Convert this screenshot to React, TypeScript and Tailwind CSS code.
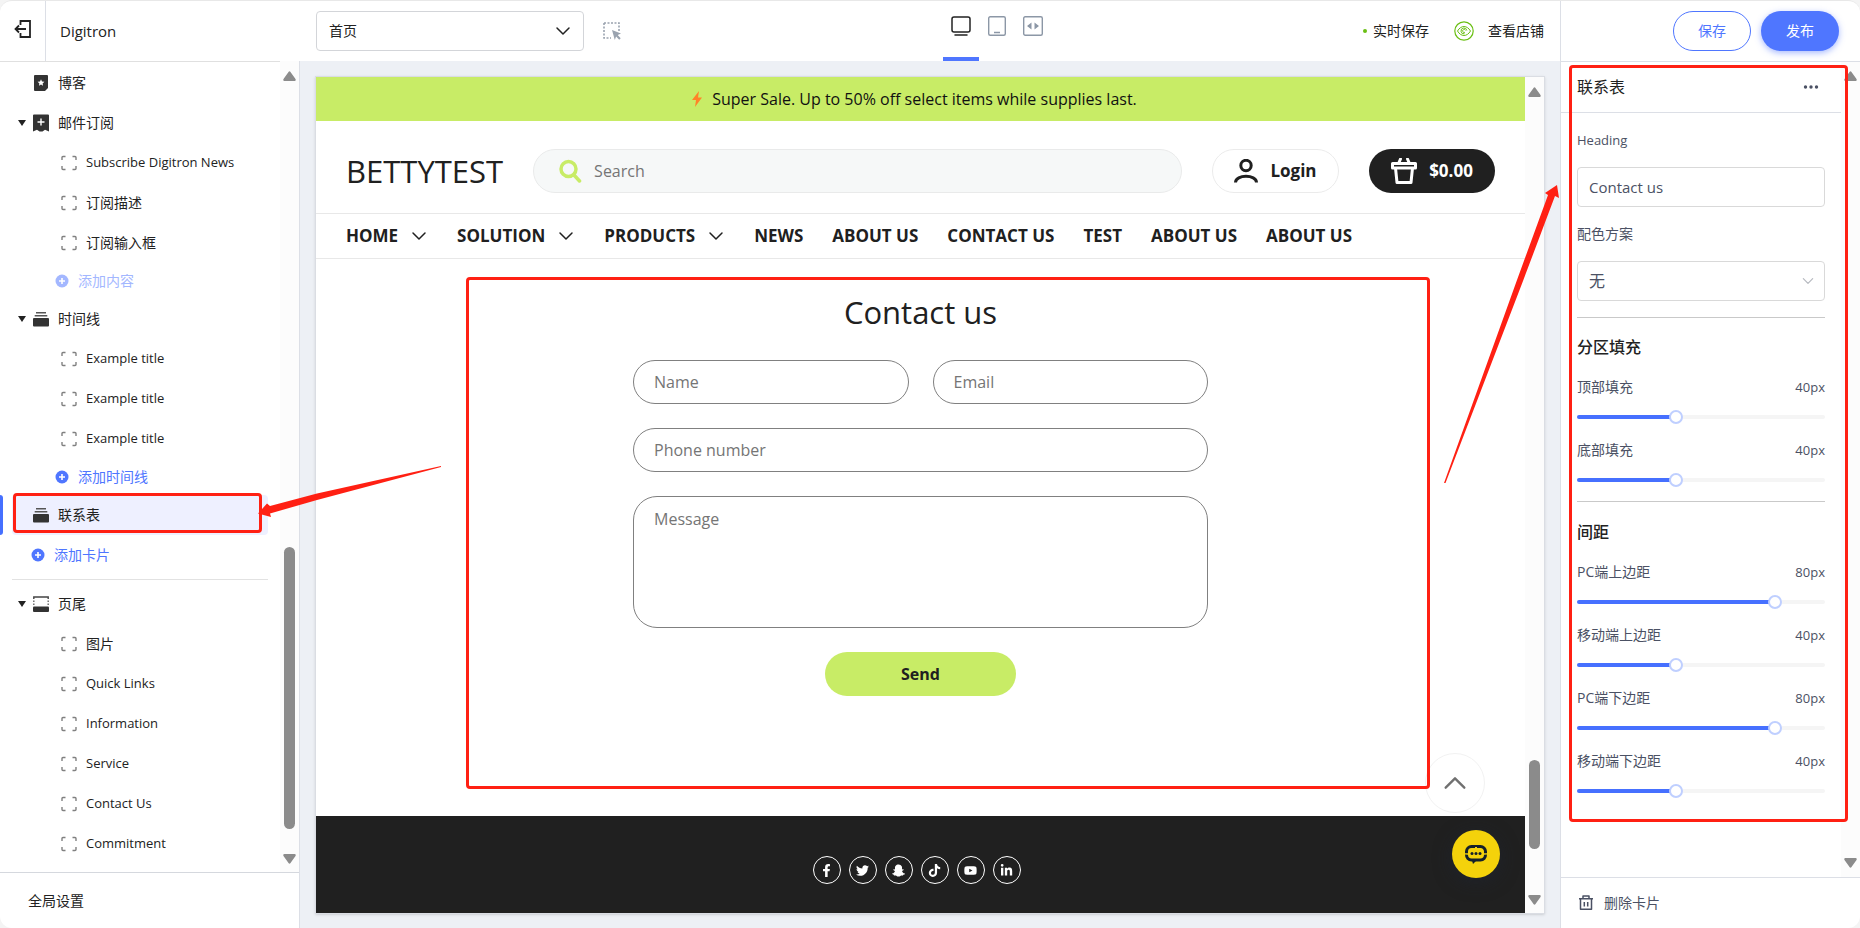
import { useState } from "react";
import type { ReactNode } from "react";
import { clsx } from "clsx";
import {
	FaFacebookF,
	FaLinkedinIn,
	FaSnapchatGhost,
	FaTiktok,
	FaTwitter,
	FaYoutube,
} from "react-icons/fa";

interface ChevronProps {
	className?: string;
	up?: boolean;
}

const Chevron = ({ className, up }: ChevronProps) => (
	<svg
		viewBox="0 0 18 18"
		fill="none"
		stroke="currentColor"
		strokeWidth="1.5"
		strokeLinecap="round"
		strokeLinejoin="round"
		className={className}>
		<path d={up ? "M3 12l6-6 6 6" : "M3 6l6 6 6-6"} />
	</svg>
);

const ExitIcon = () => (
	<svg viewBox="0 0 20 20" fill="none" stroke="#222" strokeWidth="1.800" className="size-5">
		<path d="M7.500 6V2H17v16H7.500v-4" />
		<path d="M13 10H3M6 6.500L2.500 10 6 13.500" />
	</svg>
);

const PickIcon = () => (
	<svg viewBox="0 0 20 20" fill="none" className="size-5">
		<path
			d="M2 2h15v8M2 2v15h7"
			stroke="#9aa3af"
			strokeWidth="1.600"
			strokeDasharray="2 1.500"
		/>
		<path d="M10 9l9 3.500-3.300 1.500 3 3.200-1.500 1.500-3.100-3.100L12.800 19z" fill="#9aa3af" />
	</svg>
);

const DesktopIcon = () => (
	<svg viewBox="0 0 20 20" fill="none" stroke="#222" strokeWidth="1.500" className="size-5">
		<rect x="1" y="1" width="18" height="15" rx="2" />
		<path d="M4 19h12" strokeLinecap="round" />
	</svg>
);

const TabletIcon = () => (
	<svg viewBox="0 0 20 20" fill="none" stroke="#8c97a6" strokeWidth="1.400" className="size-5">
		<rect x="1.700" y="0.700" width="16.600" height="18.600" rx="1.500" />
		<path d="M7 16.500h6" />
	</svg>
);

const WideIcon = () => (
	<svg viewBox="0 0 20 20" fill="none" stroke="#8c97a6" strokeWidth="1.400" className="size-5">
		<rect x="0.700" y="0.700" width="18.600" height="18.600" rx="1.500" />
		<path d="M8.500 6.500v7L4 10zM11.500 6.500v7L16 10z" fill="#8c97a6" stroke="none" />
	</svg>
);

const EyeIcon = () => (
	<svg viewBox="0 0 20 20" fill="none" stroke="#6abf13" className="size-5">
		<circle cx="10" cy="10" r="9.200" strokeWidth="1.200" />
		<path d="M3.500 10c3.500-6 9.500-6 13 0-3.500 6-9.500 6-13 0z" />
		<path d="M12.800 9.500a2.900 2.900 0 1 0-2.300 3.300M11.500 9.300a1.500 1.500 0 1 0-.6 2" />
	</svg>
);

const BlogIcon = () => (
	<svg viewBox="0 0 18 18" className="size-[18px]">
		<path d="M2 2a1 1 0 0 1 1-1h12a1 1 0 0 1 1 1v12l-3 3H3a1 1 0 0 1-1-1z" fill="#333" />
		<path
			d="M9 5.300l1 2.200 2.400.3-1.800 1.600.5 2.400L9 10.600l-2.100 1.200.5-2.400-1.800-1.600 2.400-.3z"
			fill="#fff"
		/>
	</svg>
);

const BookmarkIcon = () => (
	<svg viewBox="0 0 18 18" className="size-[18px]">
		<path d="M1 1.500a1 1 0 0 1 1-1h14a1 1 0 0 1 1 1v16l-4-1.800-2.500 1.800h-3L5 15.700l-4 1.800z" fill="#333" />
		<path d="M9 4.500v7M5.500 8h7" stroke="#fff" strokeWidth="1.400" />
	</svg>
);

const StackIcon = () => (
	<svg viewBox="0 0 18 18" className="size-[18px]">
		<path d="M4 2.700h10M2.700 5.800h12.600" stroke="#555" strokeWidth="1.500" />
		<rect x="1" y="8" width="16" height="8.500" rx="1" fill="#333" />
	</svg>
);

const FooterIcon = () => (
	<svg viewBox="0 0 18 18" className="size-[18px]">
		<path d="M1.800 4V2h14.400v2" fill="none" stroke="#444" strokeWidth="1.400" />
		<path d="M1.800 5.500v6M16.200 5.500v6" stroke="#666" strokeWidth="1.400" strokeDasharray="1.500 1.500" />
		<rect x="1" y="11.500" width="16" height="5.500" rx="1" fill="#333" />
	</svg>
);

const BlockIcon = () => (
	<svg viewBox="0 0 18 18" fill="none" stroke="#808080" strokeWidth="1.400" className="size-[18px]">
		<path d="M5.500 2.500H3a1 1 0 0 0-1 1V6M12.500 2.500H15a1 1 0 0 1 1 1V6M2 12v2.500a1 1 0 0 0 1 1h2.500M16 12v2.500a1 1 0 0 1-1 1h-2.500" />
	</svg>
);

const PlusIcon = () => (
	<svg viewBox="0 0 16 16" className="size-4">
		<circle cx="8" cy="8" r="6.500" fill="currentColor" />
		<path d="M8 5v6M5 8h6" stroke="#fff" strokeWidth="1.600" />
	</svg>
);

const SearchIcon = () => (
	<svg
		viewBox="0 0 24 24"
		fill="none"
		stroke="#c8ec66"
		strokeWidth="3.500"
		strokeLinecap="round"
		className="size-6 shrink-0">
		<circle cx="10.500" cy="10" r="7.500" />
		<path d="M16 16l5.500 6" />
	</svg>
);

const UserIcon = () => (
	<svg viewBox="0 0 24 24" fill="none" stroke="#202020" strokeWidth="3" className="size-6">
		<circle cx="12" cy="6.500" r="5.200" />
		<path d="M1.500 23.500c0-8.300 21-8.300 21 0" />
	</svg>
);

const BasketIcon = () => (
	<svg
		viewBox="0 0 26 26"
		fill="none"
		stroke="#fff"
		strokeWidth="3"
		strokeLinejoin="round"
		className="size-[26px]">
		<path d="M1.500 5.500h23v4.500h-23z" />
		<path d="M4.500 10l1.500 14.500h14L21.500 10" />
		<path d="M9.500 1L7.500 5.500M16.500 1L18.500 5.500" strokeLinecap="round" />
	</svg>
);

const ChatIcon = () => (
	<svg viewBox="0 0 24 24" fill="none" className="size-6">
		<path
			d="M2.500 11.300V9.500a5 5 0 0 1 5-5h9a5 5 0 0 1 5 5v1.800M2.500 12.700a5 5 0 0 0 5 5.300h9a5 5 0 0 0 5-5.300"
			stroke="#14202b"
			strokeWidth="3"
		/>
		<path d="M8 18.500h4.500L9 22z" fill="#14202b" />
		<path d="M11 5h2v1.500h-2z" fill="#f4d20b" />
		<circle cx="8" cy="11.500" r="1.500" fill="#14202b" />
		<circle cx="12" cy="11.500" r="1.500" fill="#14202b" />
		<circle cx="16" cy="11.500" r="1.500" fill="#14202b" />
	</svg>
);

const TrashIcon = () => (
	<svg
		viewBox="0 0 16 16"
		fill="none"
		stroke="#4b5164"
		strokeWidth="1.500"
		strokeLinejoin="round"
		className="size-4">
		<path d="M1 3.800h14M5 3.500V1h6v2.500M2.500 4v10.200h11V4M6.300 7v4.500M9.700 7v4.500" />
	</svg>
);

interface ScrollBarProps {
	className?: string;
	children?: ReactNode;
}

const ScrollBar = ({ className, children }: ScrollBarProps) => (
	<div className={clsx("w-[19px] shrink-0 flex flex-col items-center bg-[#fcfcfc]", className)}>
		<svg viewBox="0 0 13 10" className="w-[13px] h-[10px] shrink-0">
			<path d="M5.500 1q1-1.500 2 0l5 7q.8 2-1 2h-10q-1.800 0-1-2z" fill="#8b8b8b" />
		</svg>
		<div className="flex-1 flex flex-col justify-end">{children}</div>
		<svg viewBox="0 0 13 10" className="w-[13px] h-[10px] shrink-0">
			<path d="M5.500 9q1 1.500 2 0l5-7q.8-2-1-2h-10q-1.800 0-1 2z" fill="#8b8b8b" />
		</svg>
	</div>
);

interface GroupRowProps {
	icon: ReactNode;
	text: string;
	open?: boolean;
	active?: boolean;
}

const GroupRow = ({ icon, text, open, active }: GroupRowProps) => (
	<div className="relative h-10 px-3">
		{active && <span className="absolute left-0 inset-y-0 w-[3px] rounded-r bg-[#4670ff]" />}
		<button
			type="button"
			className={clsx("w-full h-full flex items-center rounded text-sm", active && "bg-[#eef0ff]")}>
			<span className="w-5 flex justify-center">
				{open && (
					<svg viewBox="0 0 8 6" className="w-2 h-1.5">
						<path d="M0 0h8L4 6z" fill="#222" />
					</svg>
				)}
			</span>
			<span className="mr-2">{icon}</span>
			{text}
		</button>
		{active && (
			<span className="absolute bottom-0.5 -top-0.5 left-[13px] right-[18px] rounded border-[3px] border-[#ff2013]" />
		)}
	</div>
);

interface ChildRowProps {
	text: string;
	cjk?: boolean;
}

const ChildRow = ({ text, cjk }: ChildRowProps) => (
	<button
		type="button"
		className={clsx("h-10 w-full flex items-center gap-2 pl-15", cjk ? "text-sm" : "text-[13px]")}>
		<BlockIcon />
		{text}
	</button>
);

interface AddRowProps {
	text: string;
	className: string;
}

const AddRow = ({ text, className }: AddRowProps) => (
	<button type="button" className={clsx("w-full flex items-center gap-2 text-sm", className)}>
		<PlusIcon />
		{text}
	</button>
);

const Sidebar = () => (
	<aside className="w-[300px] shrink-0 flex flex-col border-r border-[#dcdfe6]">
		<div className="flex-1 min-h-0 flex">
			<div className="flex-1 overflow-hidden border-t border-[#e0e0e0] pt-px">
				<GroupRow icon={<BlogIcon />} text="博客" />
				<GroupRow icon={<BookmarkIcon />} text="邮件订阅" open />
				<ChildRow text="Subscribe Digitron News" />
				<ChildRow text="订阅描述" cjk />
				<ChildRow text="订阅输入框" cjk />
				<AddRow text="添加内容" className="h-9 pl-[54px] text-[#a3b7ff]" />
				<GroupRow icon={<StackIcon />} text="时间线" open />
				<ChildRow text="Example title" />
				<ChildRow text="Example title" />
				<ChildRow text="Example title" />
				<AddRow text="添加时间线" className="h-9 pl-[54px] text-[#4f76ff]" />
				<GroupRow icon={<StackIcon />} text="联系表" active />
				<AddRow text="添加卡片" className="h-10 pl-[30px] text-[#4f76ff]" />
				<hr className="mx-3 my-1 border-[#e2e2e2]" />
				<GroupRow icon={<FooterIcon />} text="页尾" open />
				<ChildRow text="图片" cjk />
				<ChildRow text="Quick Links" />
				<ChildRow text="Information" />
				<ChildRow text="Service" />
				<ChildRow text="Contact Us" />
				<ChildRow text="Commitment" />
			</div>
			<ScrollBar className="pt-2.5 pb-2">
				<div className="w-[11px] h-[282px] mb-[25px] rounded-full bg-[#8b8b8b]" />
			</ScrollBar>
		</div>
		<button type="button" className="h-14 shrink-0 border-t border-[#d5d8de] pl-7 text-left text-sm">
			全局设置
		</button>
	</aside>
);

const TopBar = () => (
	<header className="h-[60px] shrink-0 flex">
		<div className="w-[300px] shrink-0 flex items-center">
			<button
				type="button"
				aria-label="退出"
				className="w-[46px] h-full pb-1 flex items-center justify-center border-r border-[#dcdfe6]">
				<ExitIcon />
			</button>
			<span className="pl-3.5 text-[15px]">Digitron</span>
		</div>
		<div className="flex-1 flex items-center justify-between px-4">
			<div className="flex items-center gap-2.5">
				<div className="relative">
					<select
						aria-label="页面"
						className="appearance-none w-[268px] h-10 px-3 rounded border border-[#d3d5d9] bg-white text-sm">
						<option>首页</option>
					</select>
					<Chevron className="absolute right-3 top-[11px] size-[18px] pointer-events-none" />
				</div>
				<button type="button" aria-label="选择" className="size-9 flex items-center justify-center">
					<PickIcon />
				</button>
			</div>
			<div className="self-stretch flex">
				<button
					type="button"
					aria-label="电脑"
					className="w-9 pt-[15px] flex justify-center border-b-4 border-[#4f76ff]">
					<DesktopIcon />
				</button>
				<button type="button" aria-label="平板" className="w-9 pt-[15px] flex justify-center">
					<TabletIcon />
				</button>
				<button type="button" aria-label="宽屏" className="w-9 pt-[15px] flex justify-center">
					<WideIcon />
				</button>
			</div>
			<div className="flex items-center text-sm">
				<span className="mr-1.5 size-1 rounded-full bg-[#6abf13]" />
				<span className="mr-[25px]">实时保存</span>
				<a href="#store" className="flex items-center gap-3.5">
					<EyeIcon />
					查看店铺
				</a>
			</div>
		</div>
		<div className="w-[300px] shrink-0 flex items-center justify-end gap-2.5 pr-[21px] border-l border-[#dcdfe6]">
			<button
				type="button"
				className="w-[78px] h-10 rounded-full border border-[#4f76ff] text-sm text-[#4f76ff]">
				保存
			</button>
			<button
				type="button"
				className="w-[78px] h-10 rounded-full bg-[#4f76ff] text-sm text-white shadow-[0_2px_6px_rgba(79,118,255,0.5)]">
				发布
			</button>
		</div>
	</header>
);

const navItems = [
	{ text: "HOME", menu: true },
	{ text: "SOLUTION", menu: true },
	{ text: "PRODUCTS", menu: true },
	{ text: "NEWS" },
	{ text: "ABOUT US" },
	{ text: "CONTACT US" },
	{ text: "TEST" },
	{ text: "ABOUT US" },
	{ text: "ABOUT US" },
];

const socials = [
	{ name: "Facebook", Icon: FaFacebookF },
	{ name: "Twitter", Icon: FaTwitter },
	{ name: "Snapchat", Icon: FaSnapchatGhost },
	{ name: "TikTok", Icon: FaTiktok },
	{ name: "YouTube", Icon: FaYoutube },
	{ name: "LinkedIn", Icon: FaLinkedinIn },
];

const StoreHeader = () => (
	<>
		<div className="h-11 pr-3 flex items-center justify-center bg-[#c8ec66] text-base text-[#111]">
			<svg viewBox="0 0 10 16" className="w-2.5 h-4 mr-2.5">
				<path d="M7 0L0 9h4l-1 7 7-9.500H6z" fill="#ff8328" />
			</svg>
			Super Sale. Up to 50% off select items while supplies last.
		</div>
		<div className="flex items-center gap-[30px] px-[30px] pt-7 pb-5 border-b border-[#e8e8e8]">
			<a href="#home" className="text-[31px] leading-11">
				BETTYTEST
			</a>
			<label className="flex-1 h-11 flex items-center gap-3 pl-6 rounded-full border border-[#e9eaea] bg-[#f6f8f8]">
				<SearchIcon />
				<input
					type="search"
					aria-label="Search"
					placeholder="Search"
					className="flex-1 bg-transparent outline-none text-base placeholder:text-[#757575]"
				/>
			</label>
			<button
				type="button"
				className="w-[127px] h-11 flex items-center justify-center gap-3 rounded-full border border-[#ebebeb] text-[17px] font-bold">
				<UserIcon />
				Login
			</button>
			<button
				type="button"
				className="w-[126px] h-11 flex items-center justify-center gap-3 rounded-full bg-[#202020] text-[17px] text-white font-bold">
				<BasketIcon />
				$0.00
			</button>
		</div>
		<nav className="h-[45px] flex items-center gap-[29px] px-[30px] border-b border-[#e8e8e8] text-[17px] font-bold">
			{navItems.map((item, i) => (
				<a key={i} href="#nav" className="flex items-center gap-3">
					{item.text}
					{item.menu && <Chevron className="size-[18px]" />}
				</a>
			))}
		</nav>
	</>
);

const fieldClass =
	"w-full border border-[#808080] px-5 text-base outline-none placeholder:text-[#757575]";

const ContactForm = () => (
	<section className="relative flex flex-col items-center pt-[31px] pb-30">
		<h2 className="mb-[26px] text-[31px] leading-11">Contact us</h2>
		<form className="w-full max-w-[575px] grid grid-cols-2 gap-6">
			<input aria-label="Name" placeholder="Name" className={clsx(fieldClass, "h-11 rounded-full")} />
			<input
				type="email"
				aria-label="Email"
				placeholder="Email"
				className={clsx(fieldClass, "h-11 rounded-full")}
			/>
			<input
				type="tel"
				aria-label="Phone number"
				placeholder="Phone number"
				className={clsx(fieldClass, "h-11 rounded-full col-span-2")}
			/>
			<textarea
				aria-label="Message"
				placeholder="Message"
				className={clsx(fieldClass, "h-[132px] col-span-2 block resize-none rounded-3xl py-2.5")}
			/>
			<button
				type="button"
				className="col-span-2 justify-self-center w-[191px] h-11 rounded-full bg-[#c8ec66] font-bold">
				Send
			</button>
		</form>
	</section>
);

const Preview = () => (
	<main className="flex-1 min-w-0 p-[15px] pb-[14px] flex bg-[#edf0f5]">
		<div className="flex-1 min-w-0 flex border border-[#dadde3] bg-white text-[#202020] shadow-sm">
			<div className="relative flex-1 min-w-0 flex flex-col overflow-hidden">
				<StoreHeader />
				<ContactForm />
				<footer className="flex-1 flex justify-center gap-2 pt-10 pr-2 bg-[#202020] text-white">
					{socials.map(({ name, Icon }) => (
						<a
							key={name}
							href="#social"
							aria-label={name}
							className="size-7 flex items-center justify-center rounded-full border border-white">
							<Icon className="size-[13px]" />
						</a>
					))}
				</footer>
				<button
					type="button"
					aria-label="Back to top"
					className="absolute right-10 bottom-[100px] size-[60px] flex items-center justify-center rounded-full border border-[#f2f2f2] text-[#707070]">
					<Chevron up className="size-7" />
				</button>
				<button
					type="button"
					aria-label="Chat"
					className="absolute right-[25px] bottom-[35px] size-12 flex items-center justify-center rounded-full bg-[#f4d20b] shadow-[0_4px_18px_rgba(30,36,50,0.6)]">
					<ChatIcon />
				</button>
				<span className="absolute left-[150px] right-[95px] top-[200px] bottom-[124px] rounded border-[3px] border-[#ff2013] pointer-events-none" />
			</div>
			<ScrollBar className="pt-2.5 pb-2">
				<div className="w-[11px] h-[89px] mb-[46px] rounded-full bg-[#8b8b8b]" />
			</ScrollBar>
		</div>
	</main>
);

interface SliderProps {
	id: string;
	label: string;
	initial: number;
}

const Slider = ({ id, label, initial }: SliderProps) => {
	const [value, setValue] = useState(initial);

	return (
		<div className="h-[63px] pt-3">
			<div className="flex justify-between leading-5">
				<label htmlFor={id} className="text-sm leading-5">
					{label}
				</label>
				<output htmlFor={id} className="text-[13px]">
					{value}px
				</output>
			</div>
			<div className="relative mt-[13px] h-3.5 flex items-center">
				<div className="w-full h-1 rounded-full bg-[#f5f5f5]">
					<div className="h-full rounded-full bg-[#4670ff]" style={{ width: `${value}%` }} />
				</div>
				<input
					id={id}
					type="range"
					min={0}
					max={100}
					value={value}
					onChange={(e) => setValue(Number(e.target.value))}
					className="absolute -left-[7px] w-[calc(100%+14px)] h-3.5 appearance-none bg-transparent [&::-webkit-slider-thumb]:appearance-none [&::-webkit-slider-thumb]:size-3.5 [&::-webkit-slider-thumb]:rounded-full [&::-webkit-slider-thumb]:border-2 [&::-webkit-slider-thumb]:border-[#bfcfff] [&::-webkit-slider-thumb]:bg-white"
				/>
			</div>
		</div>
	);
};

const Settings = () => (
	<aside className="w-[300px] shrink-0 flex flex-col border-l border-t border-[#dcdfe6] text-[#4b5164]">
		<div className="relative flex-1 min-h-0 flex">
			<div className="flex-1 min-w-0 overflow-hidden">
				<div className="h-[51px] flex items-center justify-between pl-4 pr-[22px] border-b border-[#dcdfe6] text-[#222]">
					<h2 className="text-base">联系表</h2>
					<button type="button" aria-label="更多">
						<svg viewBox="0 0 16 4" className="w-4 h-1">
							<circle cx="2.500" cy="2" r="1.700" fill="#4b5164" />
							<circle cx="8" cy="2" r="1.700" fill="#4b5164" />
							<circle cx="13.500" cy="2" r="1.700" fill="#4b5164" />
						</svg>
					</button>
				</div>
				<div className="px-4">
					<label htmlFor="heading" className="block pt-[17px] text-[13px] leading-5">
						Heading
					</label>
					<input
						id="heading"
						defaultValue="Contact us"
						className="mt-[17px] w-full h-10 px-[11px] rounded border border-[#d9d9d9] text-[15px]"
					/>
					<label htmlFor="scheme" className="block pt-[17px] text-sm leading-5">
						配色方案
					</label>
					<div className="relative mt-[17px]">
						<select
							id="scheme"
							className="appearance-none block w-full h-10 px-[11px] rounded border border-[#d9d9d9] bg-white text-base">
							<option>无</option>
						</select>
						<Chevron className="absolute right-2.5 top-[13px] size-3.5 text-[#b5b8bf] pointer-events-none" />
					</div>
					<div className="mt-4 pt-[17px] border-t border-[#c9c9c9]">
						<h3 className="mb-1.5 text-base font-medium text-[#222]">分区填充</h3>
						<Slider id="pad-top" label="顶部填充" initial={40} />
						<Slider id="pad-bottom" label="底部填充" initial={40} />
					</div>
					<div className="mt-2.5 pt-[18px] border-t border-[#c9c9c9]">
						<h3 className="mb-1.5 text-base font-medium text-[#222]">间距</h3>
						<Slider id="pc-top" label="PC端上边距" initial={80} />
						<Slider id="mobile-top" label="移动端上边距" initial={40} />
						<Slider id="pc-bottom" label="PC端下边距" initial={80} />
						<Slider id="mobile-bottom" label="移动端下边距" initial={40} />
					</div>
				</div>
			</div>
			<ScrollBar className="pt-[9px] pb-[9px]" />
			<span className="absolute left-2 right-3 top-[3px] h-[757px] rounded border-[3px] border-[#ff2013] pointer-events-none" />
		</div>
		<button
			type="button"
			className="h-[51px] shrink-0 flex items-center gap-2.5 pl-[17px] border-t border-[#dcdfe6] text-sm">
			<TrashIcon />
			删除卡片
		</button>
	</aside>
);

// hand-drawn style pointers that run from the preview to both panels
const Arrows = () => (
	<>
		<svg
			viewBox="0 0 190 60"
			className="absolute left-[255px] top-[459px] w-[190px] h-[60px] pointer-events-none">
			<path d="M186 6L62 33.500 15 46l-3-2.500L3 53.500 16 57l-1-3.500L62 40 186 7z" fill="#ff2013" />
		</svg>
		<svg
			viewBox="0 0 120 310"
			className="absolute right-[298px] top-[179px] w-[120px] h-[310px] pointer-events-none">
			<path d="M2 303L75 100l31-85-3-2 12-8 2 13-4-2-32 85L3.500 303z" fill="#ff2013" />
		</svg>
	</>
);

const App = () => {
	return (
		<div className="h-screen min-h-[800px] bg-[#f4f4f4] font-['Open_Sans','Noto_Sans_CJK_SC',sans-serif] text-[#222]">
			<div className="relative h-full flex flex-col overflow-hidden rounded-xl border-t border-[#e8e8e8] bg-white">
				<TopBar />
				<div className="flex-1 min-h-0 flex">
					<Sidebar />
					<Preview />
					<Settings />
				</div>
				<Arrows />
			</div>
		</div>
	);
};

export default App;
